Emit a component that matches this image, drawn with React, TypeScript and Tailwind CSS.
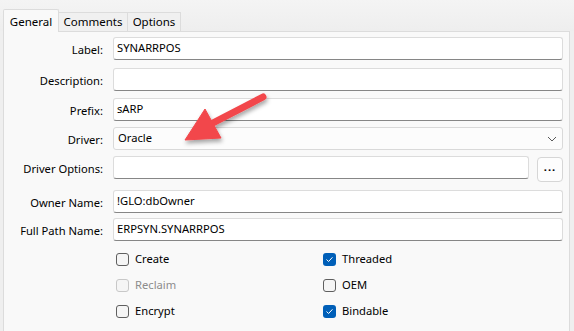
type FieldProps = {
  label: string;
  value?: string;
  top: string;
};

function Field({ label, value = '', top }: FieldProps) {
  return (
    <div className={`flex h-[23px] items-center ${top}`}>
      <div className="w-[99px] shrink-0 pt-[4px] text-right">{label}</div>
      <div className="ml-[10px] flex h-[23px] flex-1 items-center rounded-[3px] border border-[#dcdcdc] border-b-[#868686] bg-white pl-[3px]">
        {value}
      </div>
    </div>
  );
}

function Check({ label, checked = false, disabled = false }: { label: string; checked?: boolean; disabled?: boolean }) {
  return (
    <div className={`flex h-[26px] items-center gap-[6px] ${disabled ? 'text-[#8c8c8c]' : 'text-black'}`}>
      {checked ? (
        <span className="flex h-[13px] w-[13px] items-center justify-center rounded-[3px] bg-[#005fb8]">
          <svg width="9" height="9" viewBox="0 0 9 9" fill="none">
            <path d="M1.8 4.8 L3.6 6.5 L7.2 2.6" stroke="white" strokeWidth="1" strokeLinecap="round" strokeLinejoin="round" />
          </svg>
        </span>
      ) : (
        <span
          className={`h-[13px] w-[13px] rounded-[3px] border bg-[#f5f5f5] ${
            disabled ? 'border-[#c8c8c8]' : 'border-[#5f5f5f]'
          }`}
        />
      )}
      <span>{label}</span>
    </div>
  );
}

export default function App() {
  return (
    <div
      className="relative h-[331px] w-[574px] overflow-hidden bg-[#efefef] text-[11.2px] text-black"
      style={{ fontFamily: '"Noto Sans", sans-serif' }}
    >
      {/* tabs */}
      <div className="flex h-[31px] items-end bg-gradient-to-b from-[#f4f4f4] to-[#eeeeee] pl-[3px] text-[11.5px]">
        <div className="relative z-10 -mb-px flex h-[23px] w-[56px] items-start justify-center rounded-t-[2px] border border-b-0 border-[#dcdcdc] bg-[#f9f9f9] pt-[3px]">
          General
        </div>
        <div className="flex h-[19px] w-[69px] items-center justify-center border border-b-0 border-l-0 border-[#dcdcdc] bg-[#f0f0f0]">
          Comments
        </div>
        <div className="flex h-[19px] w-[53px] items-center justify-center border border-b-0 border-l-0 border-[#dcdcdc] bg-[#f0f0f0]">
          Options
        </div>
      </div>

      {/* panel */}
      <div className="ml-[3px] mr-[4px] h-[320px] border border-[#dcdcdc] bg-[#f9f9f9] pr-[6px]">
        <Field label="Label:" value="SYNARRPOS" top="mt-[5px]" />
        <Field label="Description:" top="mt-[8px]" />
        <Field label="Prefix:" value="sARP" top="mt-[7px]" />

        <div className="mt-[6px] flex h-[23px] items-center">
          <div className="w-[99px] shrink-0 pt-[4px] text-right">Driver:</div>
          <div className="ml-[10px] flex h-[23px] flex-1 items-center justify-between rounded-[3px] border border-[#d9d9d9] bg-[#fcfcfc] pl-[4px] pr-[5px]">
            <span>Oracle</span>
            <svg width="10" height="6" viewBox="0 0 10 6" fill="none">
              <path d="M1 1 L5 5 L9 1" stroke="#5a5a5a" strokeWidth="1" />
            </svg>
          </div>
        </div>

        <div className="mt-[6px] flex h-[23px] items-start">
          <div className="w-[99px] shrink-0 self-center pt-[4px] text-right">Driver Options:</div>
          <div className="ml-[10px] h-[23px] flex-1 rounded-[3px] border border-[#dcdcdc] border-b-[#868686] bg-white" />
          <div className="ml-[8px] mt-[1px] flex h-[25px] w-[26px] shrink-0 items-center justify-center rounded-[4px] border border-[#d6d6d6] bg-[#fdfdfd] pb-[4px] font-bold tracking-[1px]">
            ...
          </div>
        </div>

        <Field label="Owner Name:" value="!GLO:dbOwner" top="mt-[11px]" />
        <Field label="Full Path Name:" value="ERPSYN.SYNARRPOS" top="mt-[5px]" />

        <div className="mt-[5px] grid grid-cols-[207px_1fr] pl-[112px]">
          <div>
            <Check label="Create" />
            <Check label="Reclaim" disabled />
            <Check label="Encrypt" />
          </div>
          <div>
            <Check label="Threaded" checked />
            <Check label="OEM" />
            <Check label="Bindable" checked />
          </div>
        </div>
      </div>

      {/* annotation arrow */}
      <svg className="pointer-events-none absolute left-0 top-0" width="574" height="331">
        <defs>
          <filter id="sh" x="-20%" y="-20%" width="140%" height="160%">
            <feDropShadow dx="1" dy="3" stdDeviation="2" floodColor="#000" floodOpacity="0.35" />
          </filter>
        </defs>
        <g filter="url(#sh)" fill="#f2474b" stroke="#f2474b">
          <line x1="263" y1="97" x2="207" y2="126" strokeWidth="7" strokeLinecap="round" />
          <polygon points="185,140 205,109 221,138" strokeWidth="1" strokeLinejoin="round" />
        </g>
      </svg>
    </div>
  );
}
